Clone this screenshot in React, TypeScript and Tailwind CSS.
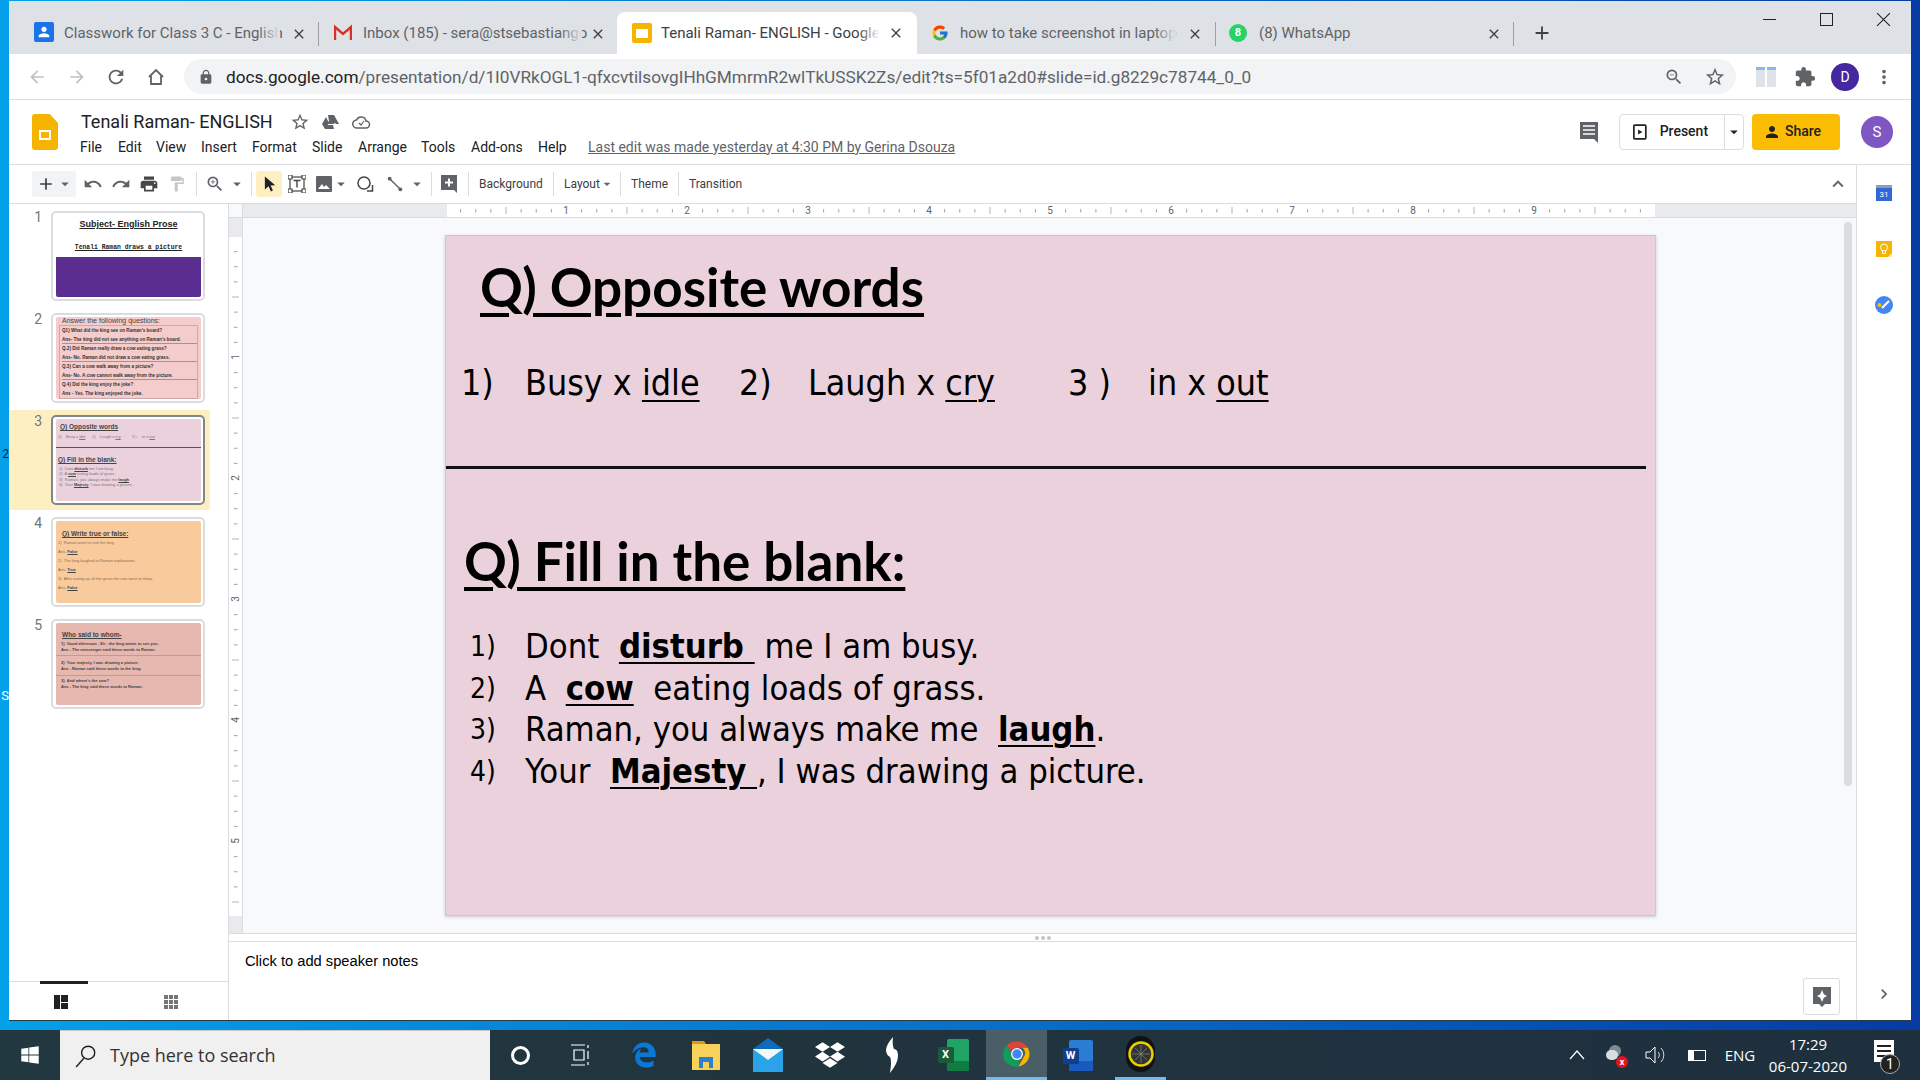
import React from "react";
import {
  MdAdd, MdArrowDropDown, MdUndo, MdRedo, MdPrint, MdFormatPaint, MdZoomIn, MdStarBorder, MdArrowBack, MdArrowForward,
  MdRefresh, MdLock, MdZoomOut, MdMoreVert, MdExtension, MdClose, MdKeyboardArrowUp, MdChevronRight, MdPerson,
} from "react-icons/md";
import { FcGoogle } from "react-icons/fc";
import { FaWindows, FaDropbox, FaEdgeLegacy } from "react-icons/fa6";

function TabTitle({ cls, text, active, fade }: { cls: string; text: string; active?: boolean; fade?: boolean }) {
  return (
    <div className={cls + " relative whitespace-nowrap text-[15px] leading-[18px] shrink-0 " + (active ? "text-[#3c4043]" : "text-[#5f6368]")}>
      {text}
      {fade ? <div className={"absolute right-0 top-0 bottom-0 w-[22px] bg-gradient-to-r from-transparent " + (active ? "to-white" : "to-[#dee1e6]")} /> : null}
    </div>
  );
}

function X({ cls }: { cls: string }) {
  return <div className={cls + " flex shrink-0"}><MdClose className="text-[#3c4043] w-[16px] h-[16px]" /></div>;
}

function Sep({ cls }: { cls: string }) {
  return <div className={cls + " w-px h-[24px] bg-[#dadce0] shrink-0"} />;
}

const Arrow = ({ cls }: { cls: string }) => (
  <div className={cls + " flex items-center justify-center shrink-0"}>
    <MdArrowDropDown className="w-[18px] h-[18px] text-[#5f6368] shrink-0" />
  </div>
);

function TopRuler() {
  const ticks = Array.from({ length: 80 }, (_, i) => i);
  return (
    <svg width="1210" height="13" className="block">
      {ticks.map((i) => {
        if (i === 0) return null;
        const x = i * 15.125 - 2;
        if (i % 8 === 0) return <text key={i} x={x} y="10" fontSize="10" textAnchor="middle" fontFamily="Roboto" fill="#5f6368">{i / 8}</text>;
        const major = i % 4 === 0;
        return <rect key={i} x={x} y={major ? 3 : 5} width="1" height={major ? 7 : 3.5} fill={major ? "#b5b8bc" : "#a0a3a7"} />;
      })}
    </svg>
  );
}

function LeftRuler() {
  const ticks = Array.from({ length: 45 }, (_, i) => i);
  return (
    <svg width="13" height="679" className="block">
      {ticks.map((i) => {
        if (i === 0) return null;
        const y = i * 15.125 - 1;
        if (i % 8 === 0)
          return <text key={i} x="0" y="0" fontSize="10" textAnchor="middle" fontFamily="Roboto" fill="#5f6368" transform={`translate(10 ${y}) rotate(-90)`}>{i / 8}</text>;
        const major = i % 4 === 0;
        return <rect key={i} x={major ? 3 : 5} y={y} width={major ? 7 : 3.5} height="1" fill={major ? "#b5b8bc" : "#a0a3a7"} />;
      })}
    </svg>
  );
}

function Thumb({ n, selected, children, bg }: { n: number; selected?: boolean; children: React.ReactNode; bg: string }) {
  return (
    <div className="h-[102px] w-[219px] shrink-0">
      <div className={"h-[100px] w-[201px] flex rounded-r-[3px] " + (selected ? "bg-[#feefc3]" : "")}>
        <div className="w-[42px] pt-[3px] pr-[9px] text-right text-[14px] text-[#70757a] leading-[16px]">{n}</div>
        <div className={"mt-[5px] w-[154px] h-[90px] rounded-[5px] bg-white p-[2px] pl-[3px] border-2 " + (selected ? "border-[#80868b]" : "border-[#dadce0]")}>
          <div className={"h-full w-full rounded-[2px] overflow-hidden " + bg}>{children}</div>
        </div>
      </div>
    </div>
  );
}

const tiny = "font-['Liberation_Sans',sans-serif] whitespace-nowrap";

function App() {
  return (
    <div className="relative w-[1920px] h-[1080px] overflow-hidden flex flex-col bg-gradient-to-r from-[#04a0ea] via-[#0a70c8] to-[#073ba4] font-['Roboto',sans-serif]">
      <div className="flex-1 flex flex-col min-h-0 pt-px pl-[9px] pr-[9px] pb-[9px]">
        <div className="h-[1020px] w-[1902px] flex flex-col bg-white border-b border-[#2a3a44]">
          {/* Tabs */}
          <div className="h-[53px] bg-[#dee1e6] flex items-end shrink-0 relative">
            <div className="ml-[25px] w-[20px] h-[20px] mb-[12px] rounded-[2px] bg-[#1a73e8] flex items-center justify-center shrink-0"><MdPerson className="text-white w-[16px] h-[16px]" /></div>
            <TabTitle fade cls="ml-[10px] w-[216px] mb-[12px]" text="Classwork for Class 3 C - English" />
            <X cls="ml-[11px] mb-[12px]" />
            <div className="ml-[11px] mb-[8px] w-px h-[24px] bg-[#9aa0a6] shrink-0" />
            <div className="ml-[15px] w-[18px] mb-[12px] shrink-0">
              <svg viewBox="0 0 18 18" className="w-[18px] h-[18px]"><path d="M1 16V3l8 7 8-7v13" fill="none" stroke="#d93025" strokeWidth="2.4" /></svg>
            </div>
            <TabTitle fade cls="ml-[11px] w-[219px] mb-[12px]" text="Inbox (185) - sera@stsebastiango" />
            <X cls="ml-[8px] mb-[12px]" />
            {/* active */}
            <div className="ml-[11px] w-[300px] h-[42px] bg-white rounded-t-[8px] flex items-center shrink-0">
              <div className="ml-[15px] w-[20px] h-[20px] rounded-[2px] bg-[#f4b400] flex items-center justify-center shrink-0"><div className="w-[12px] h-[9px] bg-white" /></div>
              <TabTitle fade active cls="ml-[9px] w-[219px]" text="Tenali Raman- ENGLISH - Google" />
              <X cls="ml-[8px]" />
            </div>
            <div className="ml-[14px] w-[18px] mb-[12px] shrink-0"><FcGoogle className="w-[18px] h-[18px]" /></div>
            <TabTitle fade cls="ml-[11px] w-[216px] mb-[12px]" text="how to take screenshot in laptop" />
            <X cls="ml-[11px] mb-[12px]" />
            <div className="ml-[12px] mb-[8px] w-px h-[24px] bg-[#9aa0a6] shrink-0" />
            <div className="ml-[13px] w-[18px] h-[18px] mb-[12px] rounded-full bg-[#25d366] text-white text-[11px] font-bold leading-[18px] text-center shrink-0">8</div>
            <TabTitle cls="ml-[12px] w-[227px] mb-[12px]" text="(8) WhatsApp" />
            <X cls="mb-[12px]" />
            <div className="ml-[11px] mb-[8px] w-px h-[24px] bg-[#9aa0a6] shrink-0" />
            <div className="ml-[17px] mb-[10px] flex"><MdAdd className="w-[22px] h-[22px] text-[#3c4043]" /></div>
            <div className="ml-auto self-start flex items-center text-[#202124]">
              <div className="w-[46px] h-[36px] flex items-center justify-center"><div className="w-[13px] h-px bg-[#202124]" /></div>
              <div className="w-[11px]" />
              <div className="w-[46px] h-[36px] flex items-center justify-center"><div className="w-[13px] h-[13px] border border-[#202124]" /></div>
              <div className="w-[11px]" />
              <div className="w-[46px] h-[36px] flex items-center justify-center"><svg viewBox="0 0 14 14" className="w-[15px] h-[15px]"><path d="M1 1l12 12M13 1L1 13" stroke="#202124" strokeWidth="1" /></svg></div>
              <div className="w-[5px]" />
            </div>
          </div>
          {/* Address bar */}
          <div className="h-[46px] flex items-center border-b border-[#dadce0] shrink-0 bg-white">
            <div className="w-[8px]" />
            <div className="w-[40px] flex justify-center"><MdArrowBack className="w-[20px] h-[20px] text-[#bdc1c6]" /></div>
            <div className="w-[39px] flex justify-center"><MdArrowForward className="w-[20px] h-[20px] text-[#bdc1c6]" /></div>
            <div className="w-[40px] flex justify-center"><MdRefresh className="w-[22px] h-[22px] text-[#5f6368]" /></div>
            <div className="w-[40px] flex justify-center">
              <svg viewBox="0 0 20 20" className="w-[20px] h-[20px]"><path d="M3 10l7-7 7 7M5 9v8h10V9" fill="none" stroke="#5f6368" strokeWidth="1.8" /></svg>
            </div>
            <div className="ml-[8px] w-[1552px] h-[35px] rounded-full bg-[#f1f3f4] flex items-center shrink-0">
              <MdLock className="ml-[14px] w-[16px] h-[16px] text-[#5f6368] shrink-0" />
              <div className="ml-[12px] text-[17.2px] leading-[22px] whitespace-nowrap text-[#5f6368]"><span className="text-[#202124]">docs.google.com</span>/presentation/d/1I0VRkOGL1-qfxcvtilsovgIHhGMmrmR2wlTkUSSK2Zs/edit?ts=5f01a2d0#slide=id.g8229c78744_0_0</div>
              <div className="ml-auto flex items-center pr-[10px] shrink-0">
                <MdZoomOut className="w-[20px] h-[20px] text-[#5f6368]" />
                <MdStarBorder className="ml-[20px] w-[22px] h-[22px] text-[#5f6368]" />
              </div>
            </div>
            <div className="ml-[20px] w-[20px] h-[20px] flex gap-[2px] shrink-0"><div className="flex-1 bg-[#dfe3e8] border-t-[3px] border-[#8ab4f8]" /><div className="flex-1 bg-[#dfe3e8] border-t-[3px] border-[#8ab4f8]" /></div>
            <MdExtension className="ml-[18px] w-[22px] h-[22px] text-[#5f6368] shrink-0" />
            <div className="ml-[15px] w-[28px] h-[28px] rounded-full bg-[#4527a0] text-white text-[14px] leading-[28px] text-center shrink-0">D</div>
            <MdMoreVert className="ml-[14px] w-[22px] h-[22px] text-[#5f6368] shrink-0" />
          </div>
          {/* Docs header */}
          <div className="h-[65px] flex border-b border-[#dadce0] shrink-0 bg-white relative">
            <div className="ml-[23px] mt-[14px] w-[26px] h-[36px] rounded-[3px] bg-[#f4b400] relative shrink-0 [clip-path:polygon(0_0,68%_0,100%_25%,100%_100%,0_100%)]">
              <div className="absolute left-[7px] top-[16px] w-[12px] h-[10px] bg-white flex items-center justify-center"><div className="w-[8px] h-[6px] bg-[#f4b400]" /></div>
            </div>
            <div className="ml-[23px] flex flex-col shrink-0">
              <div className="flex items-center h-[24px] mt-[10px]">
                <div className="text-[18px] leading-[24px] text-[#202124] w-[190px] whitespace-nowrap">Tenali Raman- ENGLISH</div>
                <MdStarBorder className="ml-[19px] w-[20px] h-[20px] text-[#5f6368]" />
                <svg viewBox="0 0 20 20" className="ml-[11px] w-[20px] h-[20px]"><path d="M7 3h6l5 9h-3l-1-1-2 1H6l2-3zM6 13h6l1 4H4zM5 5l3 6-4 6-3-5z" fill="#5f6368" /></svg>
                <svg viewBox="0 0 20 20" className="ml-[10px] w-[20px] h-[20px]"><path d="M6 16h9a3 3 0 000-7 5 5 0 00-9.5-1A4 4 0 006 16z" fill="none" stroke="#5f6368" strokeWidth="1.5" /><path d="M8 11l2 2 3-4" fill="none" stroke="#5f6368" strokeWidth="1.2" /></svg>
              </div>
              <div className="flex items-center h-[20px] mt-[3px] -ml-[1px] text-[14px] text-[#202124] whitespace-nowrap">
                <div className="w-[38px]">File</div>
                <div className="w-[38px]">Edit</div>
                <div className="w-[45px]">View</div>
                <div className="w-[51px]">Insert</div>
                <div className="w-[60px]">Format</div>
                <div className="w-[46px]">Slide</div>
                <div className="w-[63px]">Arrange</div>
                <div className="w-[50px]">Tools</div>
                <div className="w-[67px]">Add-ons</div>
                <div className="w-[50px]">Help</div>
                <div className="text-[#5f6368] underline text-[14px]">Last edit was made yesterday at 4:30 PM by Gerina Dsouza</div>
              </div>
            </div>
            <div className="ml-auto flex items-center mt-[-1px]">
              <svg viewBox="0 0 20 22" className="w-[20px] h-[22px]"><path d="M1 1h18v21l-4-4H1z" fill="#5f6368" /><path d="M4 5h12M4 9h12M4 13h12" stroke="#fff" strokeWidth="1.6" /></svg>
              <div className="ml-[20px] w-[125px] h-[36px] rounded-[4px] border border-[#dadce0] flex items-center shrink-0">
                <svg viewBox="0 0 16 18" className="ml-[13px] w-[14px] h-[18px]"><rect x="1" y="1" width="14" height="16" rx="1" fill="none" stroke="#202124" strokeWidth="2" /><path d="M6 6l5 3-5 3z" fill="#202124" /></svg>
                <div className="ml-[13px] w-[66px] text-[14px] font-medium text-[#202124]">Present</div>
                <div className="h-full w-[19px] border-l border-[#dadce0] flex items-center justify-center"><MdArrowDropDown className="w-[18px] h-[18px] text-[#202124] shrink-0" /></div>
              </div>
              <div className="ml-[8px] w-[88px] h-[36px] rounded-[4px] bg-[#fbbc04] flex items-center shrink-0">
                <MdPerson className="ml-[11px] w-[18px] h-[18px] text-[#202124]" />
                <div className="ml-[4px] text-[14px] font-medium text-[#202124]">Share</div>
              </div>
              <div className="ml-[21px] mr-[18px] w-[32px] h-[32px] rounded-full bg-[#7e57c2] text-white text-[15px] leading-[32px] text-center shrink-0">S</div>
            </div>
          </div>
          {/* Below header */}
          <div className="flex-1 flex min-h-0">
            <div className="w-[1847px] shrink-0 flex flex-col min-h-0">
              {/* Toolbar */}
              <div className="h-[39px] flex items-center border-b border-[#dadce0] shrink-0 text-[12px] text-[#3c4043]">
                <div className="ml-[23px] w-[44px] h-[26px] rounded-[3px] bg-[#f1f3f4] flex items-center shrink-0">
                  <MdAdd className="ml-[4px] w-[20px] h-[20px] text-[#3c4043]" />
                  <MdArrowDropDown className="w-[18px] h-[18px] text-[#5f6368]" />
                </div>
                <div className="ml-[3px] w-[28px] flex justify-center shrink-0"><MdUndo className="w-[20px] h-[20px] text-[#5f6368]" /></div>
                <div className="w-[28px] flex justify-center shrink-0"><MdRedo className="w-[20px] h-[20px] text-[#5f6368]" /></div>
                <div className="w-[28px] flex justify-center shrink-0"><MdPrint className="w-[20px] h-[20px] text-[#444746]" /></div>
                <div className="w-[28px] flex justify-center shrink-0"><MdFormatPaint className="w-[18px] h-[18px] text-[#c4c7c5]" /></div>
                <Sep cls="ml-[5px]" />
                <div className="ml-[4px] w-[28px] flex justify-center shrink-0"><MdZoomIn className="w-[20px] h-[20px] text-[#5f6368]" /></div>
                <Arrow cls="w-[16px]" />
                <Sep cls="ml-[6px]" />
                <div className="ml-[4px] w-[26px] h-[26px] rounded-[3px] bg-[#feefc3] flex items-center justify-center shrink-0">
                  <svg viewBox="0 0 14 18" className="w-[13px] h-[18px]"><path d="M2 1v14l4-3.5 2.5 5.5 2.2-1-2.5-5.3 5-.4z" fill="#202124" /></svg>
                </div>
                <div className="ml-px w-[28px] flex justify-center shrink-0">
                  <svg viewBox="0 0 18 18" className="w-[18px] h-[18px]"><rect x="2" y="2" width="14" height="14" fill="none" stroke="#444" strokeWidth="1.2" /><path d="M0 0h4v4H0zM14 0h4v4h-4zM0 14h4v4H0zM14 14h4v4h-4z" fill="#fff" stroke="#444" strokeWidth="1.2" /><path d="M5.5 5.5h7M9 5.5v7" stroke="#444" strokeWidth="1.4" /></svg>
                </div>
                <div className="ml-px w-[24px] flex justify-center shrink-0">
                  <svg viewBox="0 0 16 16" className="w-[16px] h-[16px]"><rect width="16" height="16" rx="1" fill="#5f6368" /><path d="M2 13l4-5 2 3 2-2 4 4z" fill="#fff" /></svg>
                </div>
                <Arrow cls="w-[10px]" />
                <div className="ml-[5px] w-[28px] flex justify-center shrink-0">
                  <svg viewBox="0 0 18 18" className="w-[18px] h-[18px]"><circle cx="8" cy="8" r="6" fill="none" stroke="#444" strokeWidth="1.5" /><path d="M11 16h5.500v-6" fill="none" stroke="#444" strokeWidth="1.500" /></svg>
                </div>
                <div className="ml-[2px] w-[28px] flex justify-center shrink-0">
                  <svg viewBox="0 0 18 18" className="w-[16px] h-[16px]"><path d="M3 3l12 12" stroke="#5f6368" strokeWidth="1.6" /><circle cx="3" cy="3" r="2.200" fill="#5f6368" /><circle cx="15" cy="15" r="2.200" fill="#5f6368" /></svg>
                </div>
                <Arrow cls="ml-[2px] w-[12px]" />
                <Sep cls="ml-[8px]" />
                <div className="ml-[4px] w-[26px] flex justify-center shrink-0">
                  <svg viewBox="0 0 16 18" className="w-[16px] h-[18px]"><path d="M0 0h16v18l-3-3H0z" fill="#5f6368" /><path d="M8 3.500v8M4 7.500h8" stroke="#fff" strokeWidth="2" /></svg>
                </div>
                <Sep cls="ml-[6px]" />
                <div className="ml-[10px] w-[74px] whitespace-nowrap">Background</div>
                <Sep cls="" />
                <div className="ml-[10px] w-[56px] flex items-center whitespace-nowrap">Layout<MdArrowDropDown className="w-[16px] h-[16px] -ml-[1px] text-[#5f6368]" /></div>
                <Sep cls="" />
                <div className="ml-[10px] w-[47px] whitespace-nowrap">Theme</div>
                <Sep cls="" />
                <div className="ml-[10px] whitespace-nowrap">Transition</div>
                <MdKeyboardArrowUp className="ml-auto mr-[7px] w-[22px] h-[22px] text-[#5f6368]" />
              </div>
              {/* Main */}
              <div className="flex-1 flex min-h-0">
                {/* Filmstrip */}
                <div className="w-[220px] shrink-0 border-r border-[#dadce0] flex flex-col">
                  <div className="flex-1 pt-[2px] flex flex-col min-h-0">
                    <Thumb n={1} bg="bg-white">
                      <div className="text-center text-[9px] leading-[10px] mt-[4px] font-bold underline text-[#222] font-['Liberation_Sans_Narrow','Liberation_Sans',sans-serif] whitespace-nowrap">Subject- English Prose</div>
                      <div className="text-center text-[6.4px] leading-[8px] mt-[15px] font-bold underline text-[#222] font-['Liberation_Mono',monospace] whitespace-nowrap">Tenali Raman draws a picture</div>
                      <div className="mt-[5px] h-[40px] bg-[#5c2d91]" />
                    </Thumb>
                    <Thumb n={2} bg="bg-[#f4cccc]">
                      <div className={tiny + " pl-[6px] text-[7px] leading-[7px] text-[#444]"}>Answer the following questions:</div>
                      <div className={tiny + " mx-[3px] mt-px border border-[#c9a9a9] text-[4.6px] leading-[9px] font-bold text-[#333] pl-[2px]"}>
                        <div>Q1) What did the king see on Raman's board?</div>
                        <div className="h-[9px] border-b border-[#76a5af]">Ans- The king did not see anything on Raman's board.</div>
                        <div>Q.2) Did Raman really draw a cow eating grass?</div>
                        <div className="h-[9px] border-b border-[#76a5af]">Ans- No. Raman did not draw a cow eating grass.</div>
                        <div>Q.3) Can a cow walk away from a picture?</div>
                        <div className="h-[9px] border-b border-[#76a5af]">Ans- No. A cow cannot walk away from the picture.</div>
                        <div>Q.4) Did the king enjoy the joke?</div>
                        <div>Ans - Yes. The king enjoyed the joke.</div>
                      </div>
                    </Thumb>
                    <Thumb n={3} selected bg="bg-[#ead1dc]">
                      <div className={tiny + " pl-[4px] pt-[3px] text-[6.5px] leading-[9px] underline font-bold text-[#444]"}>Q) Opposite words</div>
                      <div className={tiny + " pl-[2px] mt-[3px] text-[4px] leading-[6px] text-[#777] flex"}>
                        <span className="w-[8px]">1)</span><span className="w-[26px]">Busy x <u>idle</u></span><span className="w-[8px]">2)</span><span className="w-[32px]">Laugh x <u>cry</u></span><span className="w-[10px]">3 )</span><span>in x <u>out</u></span>
                      </div>
                      <div className="mt-[7px] h-px w-[146px] bg-[#555]" />
                      <div className={tiny + " pl-[2px] mt-[7px] text-[6.5px] leading-[9px] underline font-bold text-[#444]"}>Q) Fill in the blank:</div>
                      <div className={tiny + " pl-[3px] mt-[2px] text-[4px] leading-[5.3px] text-[#777]"}>
                        <div>1)&nbsp; Dont <b className="underline text-[#444]">disturb</b> me I am busy.</div>
                        <div>2)&nbsp; A <b className="underline text-[#444]">cow</b> eating loads of grass.</div>
                        <div>3)&nbsp; Raman, you always make me <b className="underline text-[#444]">laugh</b>.</div>
                        <div>4)&nbsp; Your <b className="underline text-[#444]">Majesty</b>, I was drawing a picture.</div>
                      </div>
                    </Thumb>
                    <Thumb n={4} bg="bg-[#f9cb9c]">
                      <div className={tiny + " pl-[6px] pt-[8px] text-[6.5px] leading-[9px] underline font-bold text-[#444]"}>Q) Write true or false:</div>
                      <div className={tiny + " pl-[2px] text-[4px] leading-[9px] text-[#8a6d4f]"}>
                        <div>1) &nbsp;Raman went to visit the king.</div>
                        <div>Ans- <b className="underline text-[#444]">False</b></div>
                        <div>2) &nbsp;The king laughed at Raman explanation.</div>
                        <div>Ans- <b className="underline text-[#444]">True</b></div>
                        <div>3) &nbsp;After eating up all the grass the cow went to sleep.</div>
                        <div>Ans- <b className="underline text-[#444]">False</b></div>
                      </div>
                    </Thumb>
                    <Thumb n={5} bg="bg-[#e6b8af]">
                      <div className={tiny + " pl-[6px] pt-[7px] text-[6.5px] leading-[9px] underline font-bold text-[#444]"}>Who said to whom-</div>
                      <div className={tiny + " pl-[5px] mt-[2px] text-[4px] leading-[6px] font-bold text-[#444]"}>
                        <div>1) &nbsp;Good afternoon , Sir , the king wants to see you.</div>
                        <div>Ans - The messenger said these words to Raman.</div>
                      </div>
                      <div className="h-px bg-[#c9978d] mt-[2px]" />
                      <div className={tiny + " pl-[5px] mt-[4px] text-[4px] leading-[6px] font-bold text-[#444]"}>
                        <div>2) &nbsp;Your majesty, I was drawing a picture.</div>
                        <div>Ans - Raman said these words to the king.</div>
                      </div>
                      <div className="h-px bg-[#c9978d] mt-[3px]" />
                      <div className={tiny + " pl-[5px] mt-[2px] text-[4px] leading-[6px] font-bold text-[#444]"}>
                        <div>3) &nbsp;And where's the cow?</div>
                        <div>Ans - The king said these words to Raman.</div>
                      </div>
                    </Thumb>
                  </div>
                  <div className="h-[39px] border-t border-[#dadce0] relative flex shrink-0">
                    <div className="absolute -top-px left-[31px] w-[48px] h-[3px] bg-[#202124]" />
                    <div className="ml-[45px] mt-[13px] w-[14px] h-[14px] flex gap-[1px] shrink-0"><div className="w-[6px] h-full bg-[#202124]" /><div className="flex-1 flex flex-col gap-[1px]"><div className="flex-1 bg-[#202124]" /><div className="flex-1 bg-[#202124]" /></div></div>
                    <div className="ml-[96px] mt-[13px] w-[14px] h-[14px] grid grid-cols-3 gap-px shrink-0">
                      {Array.from({ length: 9 }, (_, i) => <div key={i} className="bg-[#757575]" />)}
                    </div>
                  </div>
                </div>
                {/* Middle */}
                <div className="w-[1627px] shrink-0 flex flex-col min-w-0">
                  {/* top ruler */}
                  <div className="h-[14px] flex border-b border-[#dadce0] shrink-0 bg-[#e8eaed]">
                    <div className="w-[14px] h-full border-r border-[#dadce0] bg-[#f8f9fa] shrink-0" />
                    <div className="ml-[204px] w-[1208px] h-full bg-white overflow-hidden shrink-0"><TopRuler /></div>
                  </div>
                  {/* canvas */}
                  <div className="h-[715px] flex shrink-0 relative">
                    <div className="w-[14px] h-full shrink-0 border-r border-[#dadce0] bg-[#e8eaed] flex flex-col">
                      <div className="h-[19px] shrink-0" />
                      <div className="h-[679px] bg-white shrink-0"><LeftRuler /></div>
                    </div>
                    <div className="flex-1 bg-[#f8f9fa] pl-[202px] pt-[17px] relative">
                      <Slide />
                      <div className="absolute right-[4px] top-[4px] w-[8px] h-[564px] rounded-full bg-[#dadce0]" />
                    </div>
                  </div>
                  {/* gutter */}
                  <div className="h-[9px] border-y border-[#dadce0] flex items-center justify-center gap-[2px] shrink-0 bg-white pl-[1px]">
                    <div className="w-[4px] h-[4px] rounded-full bg-[#c4c7c5]" /><div className="w-[4px] h-[4px] rounded-full bg-[#c4c7c5]" /><div className="w-[4px] h-[4px] rounded-full bg-[#c4c7c5]" />
                  </div>
                  {/* notes */}
                  <div className="flex-1 relative pl-[16px] pt-[9px] text-[14.7px] leading-[20px] text-[#000] font-['Liberation_Sans',sans-serif]">
                    <div>Click to add speaker notes</div>
                    <div className="absolute right-[16px] top-[36px] w-[37px] h-[37px] border border-[#dadce0] rounded-[3px] bg-white flex items-center justify-center">
                      <svg viewBox="0 0 18 22" className="w-[18px] h-[22px]"><path d="M0 1h18v17h-6l-3 3-3-3H0z" fill="#5f6368" /><path d="M9 4l1.800 4.200L14 10l-3.200 1.800L9 16l-1.800-4.200L4 10l3.200-1.800z" fill="#fff" /></svg>
                    </div>
                  </div>
                </div>
              </div>
            </div>
            {/* Side */}
            <div className="flex-1 border-l border-[#dadce0] flex flex-col items-center relative min-w-0">
              <div className="mt-[20px] w-[16px] h-[16px] bg-[#3367d6] border-t-[3px] border-[#8d9db8] text-white text-[8px] leading-[13px] text-center">31</div>
              <div className="mt-[40px] w-[16px] h-[16px] rounded-[1px] bg-[#f4b400] flex items-center justify-center">
                <svg viewBox="0 0 16 16" className="w-[16px] h-[16px]"><circle cx="8" cy="6.500" r="3.500" fill="none" stroke="#fff" strokeWidth="1" /><path d="M6.500 10v2.500h3V10" fill="none" stroke="#fff" strokeWidth="1" /><path d="M16 12v4h-4z" fill="#fde9a9" /></svg>
              </div>
              <div className="mt-[39px] w-[18px] h-[18px] rounded-full bg-[#4285f4] flex items-center justify-center">
                <svg viewBox="0 0 18 18" className="w-[18px] h-[18px]"><circle cx="4.500" cy="9" r="2" fill="#fbbc04" /><path d="M7 12l7-7" stroke="#fff" strokeWidth="2.200" /></svg>
              </div>
              <MdChevronRight className="absolute left-[17px] bottom-[16px] w-[20px] h-[20px] text-[#5f6368]" />
            </div>
          </div>
        </div>
      </div>
      {/* desktop icon label fragments */}
      <div className="absolute left-0 top-[447px] w-[9px] overflow-hidden text-[12px] leading-[14px] text-[#123] text-right">2</div>
      <div className="absolute left-0 top-[689px] w-[9px] overflow-hidden text-[13px] leading-[14px] text-white text-right">S</div>
      <Taskbar />
    </div>
  );
}

function Slide() {
  const body = "font-['DejaVu_Sans_Condensed','DejaVu_Sans',sans-serif] text-[#000]";
  const head = "font-['Lato',sans-serif] font-bold text-[53px] leading-[56px] underline decoration-[4px] underline-offset-[6px] whitespace-nowrap text-[#000]";
  return (
    <div className="w-[1211px] h-[681px] bg-[#ead1dc] border border-[#d5c3cb] shadow-[0_1px_3px_rgba(60,64,67,0.25)] overflow-hidden">
      <div className={head + " mt-[23px] ml-[34px]"}>Q) Opposite words</div>
      <div className={body + " mt-[48px] ml-[15px] flex text-[35.5px] leading-[40px] whitespace-pre"}>
        <div className="w-[64px]">1)</div>
        <div className="w-[214px]">Busy x <u className="decoration-[2px] underline-offset-[5px]">idle</u></div>
        <div className="w-[69px]">2)</div>
        <div className="w-[260px]">Laugh x <u className="decoration-[2px] underline-offset-[5px]">cry</u></div>
        <div className="w-[80px]">3 )</div>
        <div>in x <u className="decoration-[2px] underline-offset-[5px]">out</u></div>
      </div>
      <div className="mt-[63px] w-[1200px] h-[3px] bg-[#111]" />
      <div className={head + " mt-[64px] ml-[18px]"}>Q) Fill in the blank:</div>
      <div className={body + " mt-[37px] ml-[24px] text-[34.3px] leading-[41.7px] whitespace-pre"}>
        <div className="flex"><div className="w-[55px] text-[28px]">1)</div><div>Dont  <b className="underline decoration-[2px] underline-offset-[4px]">disturb </b> me I am busy.</div></div>
        <div className="flex"><div className="w-[55px] text-[28px]">2)</div><div>A  <b className="underline decoration-[2px] underline-offset-[4px]">cow</b>  eating loads of grass.</div></div>
        <div className="flex"><div className="w-[55px] text-[28px]">3)</div><div>Raman, you always make me  <b className="underline decoration-[2px] underline-offset-[4px]">laugh</b>.</div></div>
        <div className="flex"><div className="w-[55px] text-[28px]">4)</div><div>Your  <b className="underline decoration-[2px] underline-offset-[4px]">Majesty </b>, I was drawing a picture.</div></div>
      </div>
    </div>
  );
}

function Taskbar() {
  const cell = "flex items-center justify-center shrink-0 h-full relative";
  return (
    <div className="h-[50px] shrink-0 flex bg-gradient-to-r from-[#22383f] to-[#1e2f3e] text-white">
      <div className={cell + " w-[60px]"}><FaWindows className="w-[20px] h-[20px] text-white" /></div>
      <div className="w-[430px] h-full bg-[#f0f0f0] border-t border-[#c8c8c8] flex items-center shrink-0">
        <svg viewBox="0 0 20 22" className="ml-[15px] w-[22px] h-[24px] shrink-0"><circle cx="12" cy="8" r="6" fill="none" stroke="#222" strokeWidth="1.300" /><path d="M8 13L1 21" stroke="#222" strokeWidth="1.300" /></svg>
        <div className="ml-[13px] text-[18px] text-[#333] font-['Open_Sans',sans-serif] whitespace-nowrap">Type here to search</div>
      </div>
      <div className={cell + " w-[60px]"}><div className="w-[19px] h-[19px] rounded-full border-[3px] border-white" /></div>
      <div className={cell + " w-[62px]"}>
        <svg viewBox="0 0 20 22" className="w-[20px] h-[22px]"><path d="M0 1h14M0 21h14M3 6h10v10H3zM17 1v3M17 7v8M17 18v3" fill="none" stroke="#fff" strokeWidth="1.200" /></svg>
      </div>
      <div className={cell + " w-[63px]"}><FaEdgeLegacy className="w-[26px] h-[28px] text-[#0a78d7]" /></div>
      <div className={cell + " w-[62px]"}>
        <svg viewBox="0 0 28 30" className="w-[28px] h-[30px]"><path d="M0 1h12l2 3h-14z" fill="#d89b14" /><rect y="4" width="28" height="26" fill="#f7d25a" /><path d="M7 28V17h14v11h-4v-6h-6v6z" fill="#2d7fd0" /></svg>
      </div>
      <div className={cell + " w-[62px]"}>
        <svg viewBox="0 0 30 34" className="w-[30px] h-[34px]"><path d="M0 11L15 0l15 11v23H0z" fill="#0f6cbd" /><path d="M0 11h30v23H0z" fill="#2aa3e8" /><path d="M0 11h30L15 22z" fill="#f2f7fb" /></svg>
      </div>
      <div className={cell + " w-[61px]"}><FaDropbox className="w-[30px] h-[30px] text-white" /></div>
      <div className={cell + " w-[62px]"}>
        <svg viewBox="0 0 16 36" className="w-[16px] h-[36px]"><path d="M10 0Q3 8 3 13t4 7q2 3 0 16q8-10 8-17t-4-7q-2-4-1-12z" fill="#fff" /></svg>
      </div>
      <div className={cell + " w-[62px]"}>
        <div className="w-[31px] h-[32px] relative">
          <div className="absolute right-0 top-0 w-[22px] h-[32px] bg-[#21a366] rounded-[2px]" />
          <div className="absolute right-0 bottom-0 w-[22px] h-[10px] bg-[#107c41] rounded-b-[2px]" />
          <div className="absolute left-0 top-[8px] w-[16px] h-[16px] bg-[#185c37] text-white text-[11px] font-bold leading-[16px] text-center rounded-[2px]">X</div>
        </div>
      </div>
      <div className={cell + " ml-[2px] w-[61px] bg-[#4a5e68] border-b-[3px] border-[#76b9ed]"}>
        <svg viewBox="0 0 48 48" className="w-[30px] h-[30px] mt-[1px]">
          <path d="M24 4a20 20 0 0117.3 10H24a10 10 0 00-9.500 6.900L7.800 10A20 20 0 0124 4z" fill="#db4437" />
          <path d="M41.300 14A20 20 0 0126 43.900L34.600 29a10 10 0 00-2.100-15z" fill="#f4b400" />
          <path d="M26 43.900A20 20 0 017.800 10l8.700 15a10 10 0 0011.500 8.800z" fill="#0f9d58" />
          <circle cx="24" cy="24" r="8.500" fill="#4285f4" stroke="#fff" strokeWidth="2" />
        </svg>
      </div>
      <div className={cell + " w-[61px]"}>
        <div className="w-[30px] h-[31px] relative">
          <div className="absolute right-0 top-0 w-[24px] h-[31px] bg-[#2b7cd3] rounded-[2px]" />
          <div className="absolute right-0 bottom-0 w-[24px] h-[10px] bg-[#185abd] rounded-b-[2px]" />
          <div className="absolute left-0 top-[8px] w-[16px] h-[16px] bg-[#103f91] text-white text-[11px] font-bold leading-[16px] text-center rounded-[2px]">W</div>
        </div>
      </div>
      <div className={cell + " ml-[7px] w-[51px] border-b-[3px] border-[#76b9ed]"}>
        <div className="w-[29px] h-[36px] rounded-full bg-[#111] flex items-center justify-center">
          <svg viewBox="0 0 26 26" className="w-[26px] h-[26px]"><circle cx="13" cy="13" r="11.500" fill="#333" stroke="#e5d100" strokeWidth="2.500" /><path d="M4 13h18M13 4v18M7 7l12 12M19 7L7 19" stroke="#8a8a8a" strokeWidth="0.700" /></svg>
        </div>
      </div>
      <div className="w-[391px] shrink-0" />
      <div className={cell + " w-[40px]"}>
        <svg viewBox="0 0 16 10" className="w-[16px] h-[10px]"><path d="M1 9l7-8 7 8" fill="none" stroke="#fff" strokeWidth="1.200" /></svg>
      </div>
      <div className={cell + " w-[38px]"}>
        <div className="relative w-[20px] h-[20px]">
          <div className="absolute left-[3px] top-0 w-[12px] h-[12px] rounded-full bg-[#7d8c94]" />
          <div className="absolute left-0 top-[5px] w-[12px] h-[10px] rounded-full bg-[#d8dde0]" />
          <div className="absolute right-[-2px] bottom-[-3px] w-[12px] h-[12px] rounded-full bg-[#e81123] text-[9px] leading-[12px] text-center text-white font-bold">x</div>
        </div>
      </div>
      <div className={cell + " w-[40px]"}>
        <svg viewBox="0 0 20 22" className="w-[20px] h-[22px]"><path d="M1 8h4l5-5v16l-5-5H1z" fill="none" stroke="#fff" strokeWidth="1" /><path d="M13 8a4 4 0 010 6M16 4a10 10 0 010 14" fill="none" stroke="#cfd6da" strokeWidth="1" /></svg>
      </div>
      <div className={cell + " w-[44px]"}>
        <div className="w-[18px] h-[11px] border border-white flex"><div className="w-[5px] h-full bg-white" /></div>
      </div>
      <div className={cell + " w-[42px] text-[15px] font-['Open_Sans',sans-serif]"}>ENG</div>
      <div className={cell + " w-[94px] flex-col text-[15px] leading-[22px] font-['Open_Sans',sans-serif]"}><div>17:29</div><div>06-07-2020</div></div>
      <div className={cell + " w-[60px]"}>
        <div className="relative w-[20px] h-[26px] -mt-[4px] -ml-[2px]">
          <div className="w-[20px] h-[22px] bg-white flex flex-col gap-[3px] pt-[5px] px-[3px]"><div className="h-[2px] bg-[#222]" /><div className="h-[2px] bg-[#222]" /><div className="h-[2px] bg-[#222]" /></div>
          <div className="absolute right-[-6px] bottom-[-8px] w-[20px] h-[20px] rounded-full bg-[#222] border border-[#aaa] text-white text-[14px] leading-[18px] text-center">1</div>
        </div>
      </div>
    </div>
  );
}

export default App;
